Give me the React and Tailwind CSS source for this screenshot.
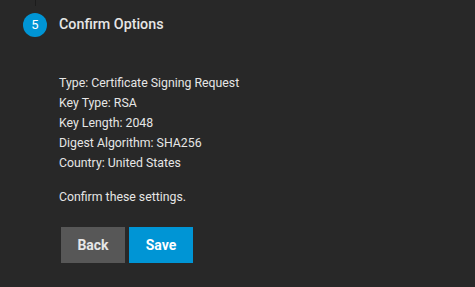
export default function App() {
  const lines = [
    'Type: Certificate Signing Request',
    'Key Type: RSA',
    'Key Length: 2048',
    'Digest Algorithm: SHA256',
    'Country: United States',
  ];

  return (
    <div className="w-[475px] h-[287px] bg-[#282828] text-[#e6e6e6] font-['Roboto',sans-serif] relative overflow-hidden">
      {/* connector from the previous step */}
      <div className="absolute left-[35px] top-0 w-px h-[6px] bg-[#1c1c1c]" />
      <div className="flex items-center pl-[23px] pt-[13px]">
        <div className="w-6 h-6 rounded-full bg-[#0095d5] text-white text-[13px] flex items-center justify-center">5</div>
        <h2 className="ml-3 text-[14.3px] font-medium">Confirm Options</h2>
      </div>
      <div className="pl-[59px] pt-[36px] text-[12.3px]">
        {lines.map((l) => (
          <div key={l} className="h-5 leading-5">{l}</div>
        ))}
        <p className="mt-[14px] leading-5">Confirm these settings.</p>
        <div className="flex gap-1 mt-5 ml-[2px]">
          <button className="w-16 h-9 bg-[#575757] text-[14px] font-bold text-[#e6e6e6]">Back</button>
          <button className="w-16 h-9 bg-[#0095d5] text-[14px] font-bold text-white">Save</button>
        </div>
      </div>
    </div>
  );
}
